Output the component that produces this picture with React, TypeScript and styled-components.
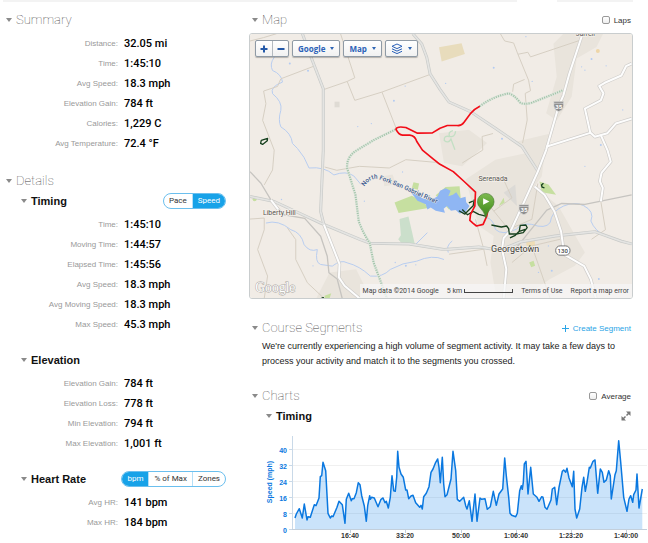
import React, { useState } from "react";
import styled, { createGlobalStyle, css } from "styled-components";

const sans = `"Liberation Sans", Arial, sans-serif`;
const medium = `Roboto, "Liberation Sans", sans-serif`;
const humanist = `"Open Sans", "Noto Sans", sans-serif`;
const accent = "#17a2e8";

const GlobalStyle = createGlobalStyle`
  *, *::before, *::after { box-sizing: border-box; }
  body { margin: 0; background: #fff; color: #111; font-family: ${sans}; }
  h2, h3, p, dl, dd { margin: 0; }
  button { font: inherit; color: inherit; border: 0; padding: 0; background: none; cursor: pointer; }
`;

const TopStrips = styled.div`
  display: grid;
  grid-template-columns: 1fr 76px;
  gap: 40px;
  height: 2px;
  margin: 0 15px 8px 3px;
`;
const Strip = styled.div`
  background: #f3f3f3;
`;
const Columns = styled.main`
  display: grid;
  grid-template-columns: 226px minmax(0, 1fr);
  gap: 23px;
`;
const Column = styled.div`
  min-width: 0;
`;
const Section = styled.section<{ $gap?: number; $inset?: boolean }>`
  margin-top: ${(p) => p.$gap ?? 0}px;
  padding-right: ${(p) => (p.$inset ? 15 : 0)}px;
`;
const HeadRow = styled.div<{ $left: number; $right?: number }>`
  display: flex;
  align-items: center;
  justify-content: space-between;
  height: 20px;
  padding: 0 ${(p) => p.$right ?? 0}px 0 ${(p) => p.$left}px;
`;
const Disclosure = styled.button`
  display: flex;
  align-items: center;
  gap: 4px;
`;
const Triangle = styled.span`
  border: 3px solid transparent;
  border-top: 4px solid #8a8a8a;
  border-bottom: 0;
`;
const Title = styled.h2`
  font: 100 13px/20px ${medium};
  color: #444;
`;
const SubTitle = styled.h3`
  font: bold 11px/20px ${sans};
  color: #111;
`;
const Facts = styled.dl`
  margin-top: 3px;
`;
const Fact = styled.div`
  display: grid;
  grid-template-columns: 118px 1fr;
  gap: 6px;
  height: 20px;
  line-height: 21px;
`;
const FactLabel = styled.dt`
  font-size: 8px;
  text-align: right;
  color: #999;
`;
const FactValue = styled.dd`
  font-family: ${medium};
  font-size: 11px;
  font-weight: 500;
  color: #000;
`;

const Segments = styled.div`
  display: flex;
  height: 16px;
  border: 1px solid #6bbfee;
  border-radius: 8px;
  overflow: hidden;
`;
const SegmentButton = styled.button<{ $active: boolean }>`
  padding: 0 5px;
  font: 8px/14px ${medium};
  color: #333;
  & + & { border-left: 1px solid #b5dff7; }
  ${(p) => p.$active && css`
    background: ${accent};
    color: #fff;
  `}
`;
const CheckLabel = styled.label`
  display: flex;
  align-items: center;
  gap: 4px;
  font-size: 8px;
  color: #333;
`;
const CheckBox = styled.input`
  appearance: none;
  width: 8px;
  height: 8px;
  margin: 0;
  border: 1px solid #999;
  border-radius: 2px;
  background: linear-gradient(#fff, #eee);
  &:checked { background: ${accent}; }
`;
const CreateLink = styled.a`
  display: flex;
  align-items: center;
  gap: 4px;
  font-size: 8px;
  color: #2aa4e6;
  text-decoration: none;
`;
const Notice = styled.p`
  padding: 1px 0 0 13px;
  font: 9px/15px ${sans};
  color: #222;
`;

const MapFrame = styled.div`
  position: relative;
  height: 266px;
  margin-top: 3px;
  border: 1px solid #c9cdce;
  border-radius: 3px;
  overflow: hidden;
`;
const MapDrawing = styled.svg`
  display: block;
  width: 100%;
  height: 100%;
`;
const MapTools = styled.div`
  position: absolute;
  top: 6px;
  left: 5px;
  display: flex;
  gap: 3px;
`;
const ToolGroup = styled.div`
  display: flex;
  height: 17px;
  border: 1px solid #8f9aa5;
  border-radius: 2px;
  background: linear-gradient(#fff, #f1f1f1);
  box-shadow: 0 1px 1px rgba(0, 0, 0, 0.25);
`;
const ToolButton = styled.button<{ $square?: boolean }>`
  display: flex;
  align-items: center;
  justify-content: center;
  gap: 5px;
  padding: 0 5px;
  ${(p) => p.$square && css`
    width: 16px;
    padding: 0;
  `}
  font: bold 8px/15px ${humanist};
  color: #2c62b8;
  & + & { border-left: 1px solid #b4bac0; }
`;
const Caret = styled.span`
  border: 2px solid transparent;
  border-top: 3px solid #2f66b5;
  border-bottom: 0;
`;
const MapFooter = styled.div`
  position: absolute;
  right: 0;
  bottom: 0;
  display: flex;
  align-items: center;
  gap: 8px;
  height: 14px;
  padding: 0 3px;
  background: rgba(246, 246, 246, 0.75);
  font: 7px/14px ${medium};
  color: #444;
  a { color: inherit; text-decoration: none; }
`;
const Scale = styled.span`
  display: flex;
  align-items: center;
  gap: 2px;
  &::after {
    content: "";
    width: 49px;
    height: 4px;
    border: 1px solid #444;
    border-top: 0;
  }
`;
const ChartFrame = styled.div`
  padding-left: 14px;
`;
const ChartDrawing = styled.svg`
  display: block;
  width: 100%;
  height: auto;
`;

type Pair = [string, string];

const summary: Pair[] = [
  ["Distance:", "32.05 mi"],
  ["Time:", "1:45:10"],
  ["Avg Speed:", "18.3 mph"],
  ["Elevation Gain:", "784 ft"],
  ["Calories:", "1,229 C"],
  ["Avg Temperature:", "72.4 °F"],
];
const timing: Pair[] = [
  ["Time:", "1:45:10"],
  ["Moving Time:", "1:44:57"],
  ["Elapsed Time:", "1:45:56"],
  ["Avg Speed:", "18.3 mph"],
  ["Avg Moving Speed:", "18.3 mph"],
  ["Max Speed:", "45.3 mph"],
];
const elevation: Pair[] = [
  ["Elevation Gain:", "784 ft"],
  ["Elevation Loss:", "778 ft"],
  ["Min Elevation:", "794 ft"],
  ["Max Elevation:", "1,001 ft"],
];
const heartRate: Pair[] = [
  ["Avg HR:", "141 bpm"],
  ["Max HR:", "184 bpm"],
];

function FactList({ items }: { items: Pair[] }) {
  return (
    <Facts>
      {items.map(([label, value]) => (
        <Fact key={label}>
          <FactLabel>{label}</FactLabel>
          <FactValue>{value}</FactValue>
        </Fact>
      ))}
    </Facts>
  );
}

interface HeadingProps {
  text: string;
  sub?: boolean;
  left: number;
  right?: number;
  children?: React.ReactNode;
}

function Heading({ text, sub, left, right, children }: HeadingProps) {
  return (
    <HeadRow $left={left} $right={right}>
      <Disclosure type="button" aria-expanded="true">
        <Triangle />
        {sub ? <SubTitle>{text}</SubTitle> : <Title>{text}</Title>}
      </Disclosure>
      {children}
    </HeadRow>
  );
}

function Segmented({ name, options, initial }: { name: string; options: string[]; initial: string }) {
  const [current, setCurrent] = useState(initial);
  return (
    <Segments role="group" aria-label={name}>
      {options.map((o) => (
        <SegmentButton key={o} type="button" $active={o === current} aria-pressed={o === current} onClick={() => setCurrent(o)}>
          {o}
        </SegmentButton>
      ))}
    </Segments>
  );
}

const tanRoads = [
  "M190 99 L93 136 L83 159 L41 173 L48 211 L38 261 L73 351 L68 411 L43 456",
  "M221 169 L293 144 L316 133 L273 0",
  "M293 144 L316 201 L398 176 L543 123",
  "M398 176 L441 286",
  "M0 22 L40 12 L80 0",
  "M0 559 L43 556 L43 591 L23 651 L53 731 L43 798",
  "M113 586 L138 621 L138 681 L173 751 L223 798",
  "M755 0 L768 22 L795 28 L808 62 L840 140 L846 172 L830 180 L836 260 L822 330",
  "M808 62 L838 56 L846 70 L995 20",
  "M828 138 L795 152 L792 175",
  "M733 301 L700 310 L702 351 L640 390",
  "M225 402 L262 412 L330 400 L420 405 L470 380 L560 388 L585 401",
  "M680 560 L705 650 L715 700 M705 650 L600 665",
  "M1058 506 L1072 591 L1030 620",
  "M760 430 L790 495 L735 535",
  "M715 510 L780 590 L850 560 L868 452",
  "M790 690 L850 640 L935 620 M850 640 L905 798",
];
const grayRoads = [
  "M0 491 L73 506 L213 571 L333 621 L363 632 L480 634 L585 651 L690 643 L753 653 L815 628 L920 610 L1040 597 L1120 626 L1151 634",
  "M158 0 L188 81 L221 166 L221 351 L213 536 L223 576",
  "M491 0 L518 31 L533 71 L543 121 L573 168 L600 206 L665 235 L740 285 L820 340 L868 414",
];
const darkRoads = [
  "M0 416 L33 451 L63 501 L103 546 L165 557 L213 611 L233 671 L238 721 L263 740 L278 798",
  "M1151 486 L1010 515 L940 512 L895 532 L840 600 L800 650 L760 650",
];
const whiteRoads = [
  "M223 576 L270 695 L268 735 L285 760 L330 798",
  "M63 501 L85 530",
  "M1003 0 L963 121 L945 186 L930 221 L893 351 L868 416 L818 526 L788 591 L765 616 L760 650 L773 710 L765 798",
  "M858 461 L888 486 L918 536 L938 596 L948 666 L1008 701 L1028 741 L1043 798",
  "M893 341 L1026 299 M1151 256 L1103 271 L1078 300 L1040 311 L1026 298 L1010 226 L1058 201 L1066 180 L1053 158 L1070 148 L1120 126 L1134 98 L1151 90",
  "M1058 306 L1078 351 L1088 386 L1060 420 L1055 445 L1064 465 L1058 506",
];
const streams = [
  "M73 71 Q58 92 68 111 Q95 122 98 146 Q60 160 68 181 Q98 205 93 231 Q84 260 93 281 Q125 300 128 331 L143 346 Q165 370 178 405 Q225 400 253 426 Q290 412 313 429 L335 455",
  "M48 571 Q85 560 123 591 Q155 600 163 636 Q180 660 203 651 Q195 690 213 696 L248 701 Q275 680 293 691 Q330 700 363 731 Q400 735 423 711 Q460 690 503 686 Q550 665 585 681",
  "M711 553 Q735 560 740 590 Q760 610 803 590 Q820 570 850 575 Q890 590 905 570 Q910 535 945 520 Q980 505 1005 518 Q1040 535 1028 565 Q1040 595 1073 611 Q1110 620 1151 634",
  "M495 640 Q515 620 535 600 M610 625 Q590 640 598 660",
];
const ponds = [
  [175, 112], [262, 30], [366, 271], [434, 202], [468, 158], [590, 150], [735, 103], [851, 144], [1010, 110], [1030, 76],
  [1000, 100], [1124, 230], [1058, 336], [345, 505], [438, 690], [470, 700], [500, 697], [900, 640], [1052, 740], [1010, 400],
  [832, 9], [760, 317], [190, 700], [460, 417], [910, 715], [870, 720], [1074, 97], [120, 90], [325, 280], [95, 500],
];

function Shield({ x, y }: { x: number; y: number }) {
  return (
    <g transform={`translate(${x} ${y})`}>
      <path d="M-15 -14 H15 V0 Q13 14 0 17 Q-13 14 -15 0 Z" fill="#8f8f8f" stroke="#e8e6e2" strokeWidth="2" />
      <path d="M-15 -8 H15" stroke="#ddd" strokeWidth="2" />
      <text y="10" textAnchor="middle" fontFamily="Roboto, sans-serif" fontWeight="700" fontSize="18" fill="#fff">35</text>
    </g>
  );
}

function RouteMap() {
  return (
    <MapDrawing viewBox="0 0 1152 798" preserveAspectRatio="xMidYMid slice" role="img" aria-label="Route map">
      <defs>
        <linearGradient id="pin-fill" x1="0" y1="0" x2="0" y2="1">
          <stop offset="0" stopColor="#7dba4f" />
          <stop offset="0.6" stopColor="#539a2b" />
          <stop offset="1" stopColor="#3d7f1f" />
        </linearGradient>
      </defs>
      <rect width="1152" height="798" fill="#f1ece6" />
      <g fill="#e9e4dc">
        <path d="M945 0 H1065 L1045 40 L985 75 L970 190 L925 262 L893 240 L925 130 L915 30 Z" />
        <path d="M570 300 L660 290 L715 330 L640 400 L585 390 Z" />
        <path d="M805 325 L903 302 L890 351 L880 430 L858 461 L930 520 L1010 660 L980 700 L905 740 L820 798 L740 780 L725 690 L735 610 L690 580 L650 440 L740 380 L835 360 Z" />
        <path d="M240 720 L320 710 L345 760 L330 798 H200 Z" />
        <path d="M400 430 L430 425 L440 455 L405 460 Z" />
      </g>
      <path d="M570 41 L638 29 L648 61 L578 84 Z" fill="#e8dcbc" />
      <path d="M765 480 L800 455 L805 520 Z" fill="#dcdad6" />
      <path d="M832 622 L858 620 L860 640 L835 645 Z" fill="#eedcb5" />
      <rect x="255" y="205" width="15" height="17" fill="#dfdbd4" />
      <circle cx="1049" cy="52" r="6" fill="#eed6a8" />
      <g fill="#c6dfa0">
        <path d="M436 509 L488 489 L523 506 L538 526 L448 541 Z" />
        <path d="M493 448 L510 452 L506 471 L488 466 Z" />
        <path d="M560 487 L590 462 L632 460 L637 512 L600 530 Z" />
        <path d="M873 446 L900 455 L923 486 L880 478 Z" />
        <path d="M225 790 L245 783 L240 798 H225 Z" />
        <circle cx="14" cy="499" r="6" />
        <path d="M750 520 L765 495 L768 510 Z M842 690 L855 685 L860 700 L848 704 Z" />
      </g>
      <path d="M451 559 L478 551 L498 639 L460 636 L447 620 L455 608 Z" fill="#cbdfcb" />
      <path d="M612 292 Q596 296 602 310 Q618 314 620 294 M602 310 Q584 306 586 322 Q598 332 606 318 L618 350" fill="none" stroke="#c3dfc4" strokeWidth="4" />
      <g fill="none" stroke="#b7cdf0" strokeWidth="3">
        {streams.map((d) => <path key={d} d={d} />)}
      </g>
      <g fill="#b3cbf2">
        {ponds.map(([x, y], i) => <circle key={i} cx={x} cy={y} r={i % 3 === 0 ? 3 : 2} />)}
      </g>
      <path
        d="M485 478 L505 484 L520 496 L545 502 L566 490 L573 474 L590 466 L605 474 L598 490 L612 486 L622 478 L634 496 L650 492 L652 508 L662 520 L650 538 L632 542 L620 532 L606 534 L594 520 L584 528 L588 540 L560 534 L545 524 L535 530 L530 514 L505 504 Z"
        fill="#8fb6f3"
      />
      <g fill="none" stroke="#d6cfc3" strokeWidth="3" strokeLinejoin="round">
        {tanRoads.map((d) => <path key={d} d={d} />)}
      </g>
      <g fill="none" stroke="#c6c4c0" strokeWidth="4" strokeLinejoin="round">
        {darkRoads.map((d) => <path key={d} d={d} />)}
      </g>
      <g fill="none" strokeLinejoin="round">
        <g stroke="#c8cac8" strokeWidth="9">{grayRoads.map((d) => <path key={d} d={d} />)}</g>
        <g stroke="#e4e4e2" strokeWidth="5">{grayRoads.map((d) => <path key={d} d={d} />)}</g>
        <g stroke="#cfcdca" strokeWidth="10">{whiteRoads.map((d) => <path key={d} d={d} />)}</g>
        <g stroke="#fdfdfd" strokeWidth="6">{whiteRoads.map((d) => <path key={d} d={d} />)}</g>
        <g stroke="#dfe6dd" strokeWidth="8">
          <path d="M438 289 L373 321 L323 351 Q290 370 293 406 L318 486 L328 566 Q340 600 361 631 L373 691 L413 798" />
          <path d="M693 219 Q730 190 780 180 Q795 183 815 208 Q825 215 850 208 L943 171" />
        </g>
        <g stroke="#9fc2a6" strokeWidth="6" strokeDasharray="3 4">
          <path d="M438 289 L373 321 L323 351 Q290 370 293 406 L318 486 L328 566 Q340 600 361 631 L373 691 L413 798" />
          <path d="M693 219 Q730 190 780 180 Q795 183 815 208 Q825 215 850 208 L943 171" />
        </g>
      </g>
      <g fill="none" stroke="#16401e" strokeWidth="4" strokeLinejoin="round">
        <path d="M32 331 L34 322 L53 316 L52 323 L38 334 Z" />
        <path d="M630 534 L648 544 L673 519 L676 500 M640 530 L656 546 L673 536 L690 545 L711 550 M660 510 L672 505" />
        <path d="M728 577 L758 583 L774 580 L780 588 L782 604 L806 604 L824 600 L836 585 L832 577 L815 578 L812 596 L800 608 L784 616 M812 596 L830 590" />
        <path d="M885 451 L879 456 L881 463 L888 465 M840 643 L846 640" />
        <path d="M216 797 L223 796" />
      </g>
      <path
        d="M693 219 Q675 228 665 241 L645 268 Q638 278 625 277 L595 277 L573 285 L550 299 L505 300 L470 283 Q443 278 440 288 Q448 305 460 306 L482 306 Q498 308 503 325 L520 351 L553 378 L573 394 L613 416 L645 445 L680 478 L678 520 L665 545 L663 563 L673 572 L683 580 L703 575 L714 550 L718 530"
        fill="none" stroke="#f20d18" strokeWidth="5" strokeLinejoin="round"
      />
      <path d="M711 555 Q706 536 694 525 A25 25 0 1 1 728 525 Q716 536 711 555 Z" fill="url(#pin-fill)" stroke="#4a7c33" strokeWidth="2" />
      <path d="M703 496 L722 506 L703 516 Z" fill="#fff" />
      <Shield x={931} y={218} />
      <Shield x={826} y={529} />
      <rect x="922" y="640" width="43" height="28" rx="13" fill="#fff" stroke="#777" strokeWidth="3" />
      <text x="943" y="661" textAnchor="middle" fontFamily="Roboto, sans-serif" fontWeight="500" fontSize="18" fill="#444">130</text>
      <g fontFamily="Roboto, sans-serif" fill="#5a5650" stroke="#f5f1ec" strokeWidth="4" paintOrder="stroke">
        <text x="39" y="546" fontSize="21">Liberty Hill</text>
        <text x="689" y="443" fontSize="21">Serenada</text>
        <text x="982" y="7" fontSize="21">Jarrell</text>
        <text x="727" y="657" fontSize="27" fill="#3f3c38">Georgetown</text>
      </g>
      <path id="river-line" d="M345 461 Q366 430 392 440 Q440 458 480 476 Q510 490 640 545" fill="none" />
      <text fontFamily="Roboto, sans-serif" fontSize="19" fontWeight="500" fill="#36588c" stroke="#f5f1ec" strokeWidth="2" paintOrder="stroke">
        <textPath href="#river-line">North Fork San Gabriel River</textPath>
      </text>
      <text x="16" y="779" fontFamily="Liberation Serif, serif" fontSize="41" fill="#fff" stroke="#a9a6a2" strokeWidth="3" paintOrder="stroke">
        Google
      </text>
    </MapDrawing>
  );
}

/* Speed samples: elapsed position (3 units per chart pixel) and height above zero (6 units per mph). */
const samples: [number, number][] = [
  [0, 36], [4, 48], [13, 64], [22, 36], [28, 78], [36, 30], [39, 40], [46, 38], [58, 76], [63, 73], [72, 96], [76, 160],
  [80, 163], [84, 203], [92, 178], [99, 50], [106, 36], [110, 42], [114, 40], [126, 68], [132, 86], [142, 76], [150, 20],
  [154, 92], [161, 110], [169, 88], [172, 94], [177, 94], [184, 112], [190, 142], [195, 136], [200, 103], [208, 72],
  [214, 26], [218, 73], [224, 103], [226, 92], [230, 98], [238, 96], [249, 70], [258, 92], [264, 96], [270, 82], [274, 86],
  [280, 66], [286, 98], [291, 163], [296, 118], [301, 116], [305, 158], [308, 236], [312, 188], [318, 168], [325, 158],
  [332, 120], [336, 120], [341, 94], [348, 102], [354, 104], [362, 82], [374, 68], [378, 74], [382, 63], [386, 100],
  [394, 110], [402, 130], [408, 173], [414, 183], [422, 203], [428, 213], [432, 188], [436, 142], [442, 218], [446, 138],
  [450, 100], [456, 106], [468, 153], [474, 236], [482, 178], [487, 92], [494, 86], [506, 98], [512, 73], [516, 63],
  [523, 88], [531, 26], [540, 108], [546, 26], [555, 96], [560, 92], [570, 94], [577, 62], [586, 70], [595, 116],
  [604, 74], [612, 108], [623, 123], [629, 216], [634, 163], [641, 98], [645, 50], [650, 44], [662, 40], [667, 50],
  [674, 118], [679, 133], [682, 122], [685, 143], [688, 198], [693, 206], [699, 108], [707, 188], [715, 108], [726, 98],
  [732, 86], [740, 100], [744, 98], [750, 68], [756, 62], [768, 90], [772, 123], [779, 128], [785, 76], [792, 128],
  [802, 176], [806, 180], [812, 173], [816, 185], [822, 156], [832, 130], [836, 176], [840, 63], [845, 36], [854, 63],
  [861, 128], [866, 158], [871, 116], [876, 143], [883, 188], [886, 186], [894, 206], [900, 210], [908, 110], [916, 183],
  [922, 173], [927, 143], [934, 150], [941, 178], [946, 163], [949, 93], [960, 166], [964, 178], [971, 268], [977, 203],
  [986, 98], [996, 56], [1002, 93], [1007, 103], [1013, 83], [1016, 106], [1023, 120], [1026, 168], [1032, 66], [1042, 123],
];

const ORIGIN_X = 32;
const BASE_Y = 104;
const line = samples.map(([x, v]) => `${(ORIGIN_X + x / 3).toFixed(1)},${(BASE_Y - v / 3).toFixed(1)}`).join(" L");
const timeTicks: [number, string][] = [
  [87, "16:40"], [142, "33:20"], [198, "50:00"], [253, "1:06:40"], [308, "1:23:20"], [363, "1:40:00"],
];

function SpeedChart() {
  return (
    <ChartDrawing viewBox="0 0 385 117" role="img" aria-label="Speed over time">
      {[8, 16, 24, 32, 40].map((v) => (
        <path key={v} d={`M29 ${BASE_Y - v * 2 - 0.5} H384`} stroke="#f0f0f0" />
      ))}
      <path d={`M${ORIGIN_X},${BASE_Y} L${line} V${BASE_Y} Z`} fill="#1a87e8" fillOpacity="0.23" />
      <path d={`M29.5 10 V${BASE_Y}`} stroke="#c9d9e8" />
      <path d={`M29 ${BASE_Y - 0.5} H384`} stroke="#c3cfdb" />
      <path d={`M${line}`} fill="none" stroke="#0a78e0" strokeWidth="1.5" strokeLinejoin="round" />
      <g fontFamily="Liberation Sans, sans-serif" fontSize="7" fontWeight="bold" fill="#0a78e0">
        {[0, 8, 16, 24, 32, 40].map((v) => (
          <g key={v}>
            <path d={`M26 ${BASE_Y - v * 2 - 0.5} h3`} stroke="#c9d9e8" />
            <text x="24" y={BASE_Y - v * 2 + 3} textAnchor="end">{v}</text>
          </g>
        ))}
        <text transform="translate(9 56) rotate(-90)" textAnchor="middle">Speed (mph)</text>
      </g>
      <g fontFamily="Liberation Sans, sans-serif" fontSize="7" fontWeight="bold" fill="#333" textAnchor="middle">
        {timeTicks.map(([x, label]) => (
          <g key={label}>
            <path d={`M${x + 0.5} ${BASE_Y} v3`} stroke="#c3cfdb" />
            <text x={x} y="112">{label}</text>
          </g>
        ))}
      </g>
    </ChartDrawing>
  );
}

export default function App() {
  return (
    <>
      <GlobalStyle />
      <TopStrips>
        <Strip />
        <Strip />
      </TopStrips>
      <Columns>
        <Column>
          <Section>
            <Heading text="Summary" left={6} />
            <FactList items={summary} />
          </Section>
          <Section $gap={18}>
            <Heading text="Details" left={6} />
            <Heading text="Timing" sub left={21}>
              <Segmented name="Timing units" options={["Pace", "Speed"]} initial="Speed" />
            </Heading>
            <FactList items={timing} />
          </Section>
          <Section $gap={16}>
            <Heading text="Elevation" sub left={21} />
            <FactList items={elevation} />
          </Section>
          <Section $gap={16}>
            <Heading text="Heart Rate" sub left={21}>
              <Segmented name="Heart rate units" options={["bpm", "% of Max", "Zones"]} initial="bpm" />
            </Heading>
            <FactList items={heartRate} />
          </Section>
        </Column>
        <Column>
          <Section $inset>
            <Heading text="Map" left={3} right={2}>
              <CheckLabel>
                <CheckBox type="checkbox" />
                Laps
              </CheckLabel>
            </Heading>
            <MapFrame>
              <RouteMap />
              <MapTools>
                <ToolGroup>
                  <ToolButton type="button" $square aria-label="Zoom in">
                    <svg width="8" height="8" viewBox="0 0 8 8"><path d="M4 0.5 V7.5 M0.5 4 H7.5" stroke="#2459a8" strokeWidth="2" /></svg>
                  </ToolButton>
                  <ToolButton type="button" $square aria-label="Zoom out">
                    <svg width="8" height="8" viewBox="0 0 8 8"><path d="M0.5 4 H7.5" stroke="#2459a8" strokeWidth="2" /></svg>
                  </ToolButton>
                </ToolGroup>
                <ToolGroup>
                  <ToolButton type="button">Google <Caret /></ToolButton>
                </ToolGroup>
                <ToolGroup>
                  <ToolButton type="button">Map <Caret /></ToolButton>
                </ToolGroup>
                <ToolGroup>
                  <ToolButton type="button" aria-label="Layers">
                    <svg width="12" height="12" viewBox="0 0 12 12" fill="none" stroke="#2c62b8">
                      <path d="M6 1 L11 3.3 L6 5.6 L1 3.3 Z M1 5.8 L6 8.1 L11 5.8 M1 8.3 L6 10.6 L11 8.3" />
                    </svg>
                    <Caret />
                  </ToolButton>
                </ToolGroup>
              </MapTools>
              <MapFooter>
                <span>Map data ©2014 Google</span>
                <Scale>5 km</Scale>
                <a href="#terms">Terms of Use</a>
                <a href="#report">Report a map error</a>
              </MapFooter>
            </MapFrame>
          </Section>
          <Section $gap={19} $inset>
            <Heading text="Course Segments" left={3} right={2}>
              <CreateLink href="#create-segment">
                <svg width="7" height="7" viewBox="0 0 7 7"><path d="M3.5 0 V7 M0 3.5 H7" stroke="#2aa4e6" /></svg>
                Create Segment
              </CreateLink>
            </Heading>
            <Notice>
              We're currently experiencing a high volume of segment activity. It may take a few days to process your activity and match it to the
              segments you crossed.
            </Notice>
          </Section>
          <Section $gap={17} $inset>
            <Heading text="Charts" left={3} right={2}>
              <CheckLabel>
                <CheckBox type="checkbox" />
                Average
              </CheckLabel>
            </Heading>
            <Heading text="Timing" sub left={17} right={2}>
              <button type="button" aria-label="Expand chart">
                <svg width="10" height="10" viewBox="0 0 10 10" fill="#777" stroke="#777">
                  <path d="M5 0.5 H9.5 V5 Z M0.5 5 V9.5 H5 Z" strokeWidth="0" />
                  <path d="M5.5 4.5 L8 2 M4.5 5.5 L2 8" strokeWidth="1.5" />
                </svg>
              </button>
            </Heading>
          </Section>
          <ChartFrame>
            <SpeedChart />
          </ChartFrame>
        </Column>
      </Columns>
    </>
  );
}
